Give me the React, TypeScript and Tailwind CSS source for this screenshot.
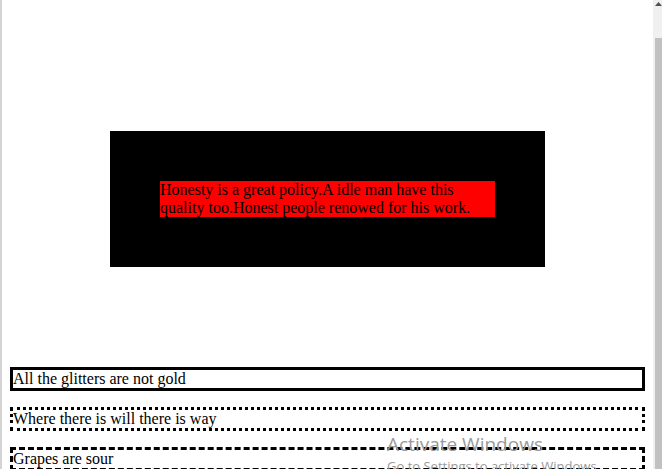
import * as React from "react";

const serif = { fontFamily: '"Liberation Serif", "Times New Roman", serif' };

export default function App() {
  return (
    <div className="relative flex h-[469px] w-[662px] overflow-hidden bg-white">
      <div className="w-[2px] bg-[#d4d4d4]" />
      <div className="flex-1 px-[8px] pt-[131px] text-[16px] leading-[18px] text-black" style={serif}>
        <div className="ml-[100px] w-[435px] bg-black p-[50px]">
          <div className="w-[335px] bg-[#ff0000]">
            Honesty is a great policy.A idle man have this quality too.Honest people renowed for his work.
          </div>
        </div>
        <p className="mt-[100px] border-[3px] border-solid border-black">All the glitters are not gold</p>
        <p className="mt-[16px] border-[3px] border-dotted border-black">Where there is will there is way</p>
        <p className="mt-[16px] border-[3px] border-dashed border-black">Grapes are sour</p>
      </div>
      <div className="flex w-[9px] flex-col bg-[#f0f0f0]">
        <div className="flex h-[38px] items-start justify-end pt-[2px]">
          <svg width="7" height="5" viewBox="0 0 7 5">
            <path d="M3.5 0L7 4H0z" fill="#505050" />
          </svg>
        </div>
        <div className="ml-[2px] flex-1 bg-[#c1c1c1]" />
      </div>
      <div
        className="pointer-events-none absolute left-[387px] top-[431px] text-[#9a9a9a]"
        style={{ fontFamily: '"Open Sans", "Noto Sans", sans-serif' }}
      >
        <div className="text-[19px] leading-[26px]">Activate Windows</div>
        <div className="text-[13px] leading-[18px]">Go to Settings to activate Windows.</div>
      </div>
    </div>
  );
}
